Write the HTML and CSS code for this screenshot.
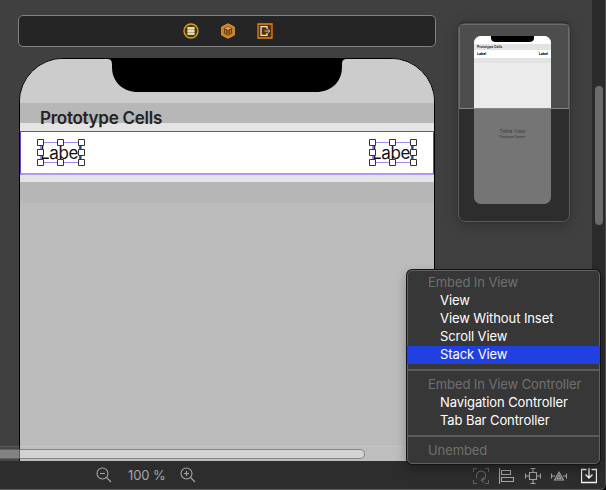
FILE: index.html
```html
<!DOCTYPE html>
<html lang="en">
<head>
<meta charset="utf-8">
<title>Interface Builder</title>
<link rel="stylesheet" href="styles.css">
</head>
<body>
<div class="window">
  <main class="canvas">
    <div class="scene">
      <div class="dock">
        <svg width="16" height="16" viewBox="0 0 16 16"><circle cx="8" cy="8" r="7" fill="#4f3b06" stroke="#dfa112" stroke-width="1.3"/><path d="M4.500 4h7v7.500h-7z" fill="#b5a987"/><path d="M4.500 5h7M4.500 8h7M4.500 11h7" stroke="#f4edd8" stroke-width="1.600"/></svg>
        <svg width="16" height="16" viewBox="0 0 16 16"><path d="M8 .8 14.300 4v8L8 15.200 1.700 12V4z" fill="#c77b24" stroke="#ec972d"/><path d="M8 3.500 12 5.300v5.200L8 12.600 4 10.500V5.300z" fill="#6b4010"/><path d="M4.500 5.300 8 4l3.500 1.300L8 7z" fill="#d9a568"/><path d="M5.500 7v3.500M8 7.500v4.500M10.500 7v3.500" stroke="#c9924f" stroke-width=".8"/></svg>
        <svg width="16" height="16" viewBox="0 0 16 16"><path d="M1 1h14v14H1z" fill="#573006" stroke="#e8820e" stroke-width="1.300"/><path d="M10 6V3.700H4v8.600h6V10" fill="none" stroke="#efe3d4" stroke-width="1.300"/><path d="M7.500 8h5M10.800 6.200 12.800 8l-2 1.800" fill="none" stroke="#d8c4a8"/></svg>
      </div>
      <div class="phone">
        <svg class="notch" width="240" height="34" viewBox="0 0 240 34"><path d="M0 0h240c-4 0-5 2-5 6v2c0 15-11 25-26 25H31C16 33 5 23 5 8V6C5 2 4 0 0 0z"/></svg>
        <div class="status"></div>
        <div class="section"><span>Prototype Cells</span></div>
        <div class="gap"></div>
        <div class="cell">
          <div class="label"><span>Label</span><svg class="handles" width="48" height="27" viewBox="0 0 48 27"><path class="frame" d="M3.500 3.500h41v20h-41z"/><path class="knobs" d="M.5.500h6v6h-6zM20.500.500h6v6h-6zM41.500.500h6v6h-6zM.5 10.500h6v6h-6zM41.500 10.500h6v6h-6zM.5 20.500h6v6h-6zM20.500 20.500h6v6h-6zM41.500 20.500h6v6h-6z"/></svg></div>
          <div class="label"><span>Label</span><svg class="handles" width="48" height="27" viewBox="0 0 48 27"><path class="frame" d="M3.500 3.500h41v20h-41z"/><path class="knobs" d="M.5.500h6v6h-6zM20.500.500h6v6h-6zM41.500.500h6v6h-6zM.5 10.500h6v6h-6zM41.500 10.500h6v6h-6zM.5 20.500h6v6h-6zM20.500 20.500h6v6h-6zM41.500 20.500h6v6h-6z"/></svg></div>
        </div>
        <div class="gap"></div>
        <div class="footer"></div>
      </div>
    </div>
    <aside class="minimap">
      <div class="mini-phone">
        <svg class="mini-notch" width="43" height="6" viewBox="0 0 43 6"><path d="M0 0h43v2q0 4-5 4H5Q0 6 0 2z"/></svg>
        <div class="mini-status"></div>
        <div class="mini-section">Prototype Cells</div>
        <div class="mini-cell"><span>Label</span><span>Label</span></div>
        <div class="mini-footer"></div>
        <div class="mini-title">Table View</div>
        <div class="mini-sub">Prototype Content</div>
      </div>
      <div class="shade"></div>
      <div class="viewport"></div>
    </aside>
    <div class="vscroll"><div class="vthumb"></div></div>
    <div class="hscroll"><div class="hthumb"></div></div>
  </main>
  <footer class="bar">
    <div class="zoom">
      <svg width="16" height="16" viewBox="0 0 16 16"><circle cx="6.500" cy="6.500" r="5.500"/><path d="M10.500 10.500 15 15M4 6.500h5"/></svg>
      <span>100 %</span>
      <svg width="16" height="16" viewBox="0 0 16 16"><circle cx="6.500" cy="6.500" r="5.500"/><path d="M10.500 10.500 15 15M4 6.500h5M6.500 4v5"/></svg>
    </div>
    <div class="tools">
      <svg class="dim" width="16" height="16" viewBox="0 0 16 16"><path d="M.5 4V.5H4M12 .5h3.500V4M.5 12v3.500H4M12 15.500h3.500V12M4.200 10.200A4.600 4.600 0 1 1 8.500 12.300M11 9.500 8.200 12.300l2.800 2.200"/></svg>
      <svg width="16" height="16" viewBox="0 0 16 16"><path d="M.5 0v16M2.500 2.500h9v4h-9zM2.500 9.500h12v4h-12z"/></svg>
      <svg width="16" height="16" viewBox="0 0 16 16"><path d="M4.500 4.500h7v7h-7zM8 4V.5M5.500.5h5M8 12v3.500M5.500 15.500h5M4 8H.5M.5 5.500v5M12 8h3.500M15.500 5.500v5"/></svg>
      <svg width="16" height="16" viewBox="0 0 16 16"><path d="M.5 5.500v5M.5 8H4M15.500 5.500v5M15.500 8H12M8 4l4.500 8h-9zM8 7l1.800 3.500H6.200z"/></svg>
      <svg class="active" width="16" height="16" viewBox="0 0 16 16"><path d="M5.500 1.500h-5v13h15v-13h-5M8 0v10M4.500 6.500 8 10l3.500-3.500"/></svg>
    </div>
  </footer>
  <nav class="menu">
    <div class="heading"><span>Embed In View</span></div>
    <div class="item"><span>View</span></div>
    <div class="item"><span>View Without Inset</span></div>
    <div class="item"><span>Scroll View</span></div>
    <div class="item selected"><span>Stack View</span></div>
    <hr>
    <div class="heading"><span>Embed In View Controller</span></div>
    <div class="item"><span>Navigation Controller</span></div>
    <div class="item"><span>Tab Bar Controller</span></div>
    <hr>
    <div class="heading"><span>Unembed</span></div>
  </nav>
</div>
</body>
</html>
```
FILE: styles.css
```css
* { box-sizing: border-box; }
body { margin: 0; background: #000; font-family: Inter, "Liberation Sans", sans-serif; }
svg { display: block; flex: none; }
.window {
  position: relative;
  display: flex;
  flex-direction: column;
  width: 606px;
  height: 490px;
  overflow: hidden;
  background: #2d2d2d;
  border-right: 1px solid #505050;
  border-bottom: 1px solid #606060;
  border-bottom-right-radius: 6px;
}
.canvas { position: relative; display: flex; height: 461px; background: #404040; overflow: hidden; }
.scene { width: 418px; margin: 15px 0 0 18px; flex: none; }
.dock {
  display: flex;
  justify-content: center;
  align-items: center;
  gap: 21px;
  height: 32px;
  padding-left: 1px;
  border: 1px solid #818181;
  border-radius: 5px;
  background: #252525;
}
.phone {
  position: relative;
  width: 416px;
  height: 480px;
  margin: 11px 0 0 1px;
  border: 1px solid #000;
  border-radius: 44px 44px 0 0;
  background: #bcbcbc;
  overflow: hidden;
}
.notch { position: absolute; left: 87px; top: 0; }
.status { height: 44px; background: #ccc; }
.section {
  height: 20px;
  padding-left: 20px;
  background: #b7b7b7;
  color: #232323;
  font-size: 17px;
  font-weight: 600;
  line-height: 30px;
  letter-spacing: -0.27px;
  white-space: nowrap;
}
.section span { position: relative; }
.gap { height: 8px; background: #e4e4e4; }
.cell {
  display: flex;
  justify-content: space-between;
  height: 44px;
  padding: 10px 19px;
  border: 1px solid #6f42d8;
  border-bottom: 2px solid #b296f3;
  background: #fff;
}
.cell + .gap { height: 7px; }
.label { position: relative; width: 42px; height: 21px; font-size: 17px; line-height: 22px; letter-spacing: -0.35px; color: #111; }
.handles { position: absolute; left: -3px; top: -3px; }
.frame { fill: none; stroke: #a487f5; }
.knobs { fill: #fff; stroke: #333; }
.footer { height: 21px; background: #b6b6b6; }

.minimap {
  position: relative;
  flex: none;
  width: 112px;
  height: 200px;
  margin: 22px 0 0 22px;
  padding: 14px 15px;
  border: 1px solid #5c5c5c;
  border-top-color: #303030;
  border-radius: 7px;
  background: #4d4d4d;
  box-shadow: 0 3px 14px rgba(0, 0, 0, .25), 0 0 1px #111;
  overflow: hidden;
}
.mini-phone { position: relative; height: 168px; width: 77px; margin-top: -1px; border-radius: 7px; background: #ebebeb; overflow: hidden; color: #111; }
.mini-notch { position: absolute; left: 17px; top: 0; }
.mini-status { height: 8px; background: #fff; }
.mini-section { height: 6px; padding-left: 3px; background: #e3e3e3; font-size: 3.400px; line-height: 6px; white-space: nowrap; font-weight: 600; }
.mini-cell { display: flex; justify-content: space-between; height: 8px; padding: 0 3px; background: #fff; font-size: 3.500px; line-height: 8px; font-weight: 700; color: #000; }
.mini-footer { height: 5px; background: #e3e3e3; }
.mini-title { margin-top: 64px; font-size: 5px; line-height: 8px; text-align: center; color: #777; }
.mini-sub { font-size: 3px; line-height: 4px; text-align: center; color: #555; }
.shade { position: absolute; left: 0; right: 0; top: 86px; bottom: 0; background: rgba(20, 20, 20, .55); }
.viewport { position: absolute; left: 0; right: 0; top: 1px; height: 85px; border: 1px solid #6b6b6b; border-bottom-color: #858585; }
.vscroll { width: 13px; margin-left: auto; padding: 86px 2px 0 3px; background: #2b2b2b; }
.vthumb { width: 8px; height: 139px; border-radius: 4px; background: #6b6b6b; }
.hscroll { position: absolute; left: 0; right: 13px; bottom: 0; height: 15px; padding-top: 2px; border-top: 1px solid rgba(255, 255, 255, .1); background: rgba(255, 255, 255, .04); }
.hthumb { width: 366px; height: 10px; margin-left: -1px; border: 1px solid rgba(70, 70, 70, .55); border-left: 0; border-radius: 0 5px 5px 0; background: rgba(255, 255, 255, .32); }

.bar { display: flex; justify-content: space-between; align-items: center; height: 28px; padding: 0 8px 0 96px; background: #2d2d2d; }
.bar svg { fill: none; stroke: #a5a5a5; stroke-width: 1.100; }
.zoom { display: flex; align-items: center; gap: 16px; color: #a5a5a5; font-size: 13px; letter-spacing: -0.1px; white-space: nowrap; }
.zoom span { width: 36px; }
.tools { display: flex; gap: 10px; padding-top: 1px; }
.bar .dim { stroke: #626262; }
.bar .active { margin-left: 4px; stroke: #f2f2f2; stroke-width: 1.300; }

.menu {
  position: absolute;
  left: 407px;
  top: 270px;
  width: 193px;
  height: 194px;
  padding-top: 3px;
  border: 1px solid #606060;
  border-radius: 5px;
  background: #373737;
  box-shadow: 0 0 0 1px #151515, 0 5px 12px rgba(0, 0, 0, .35);
  color: #fff;
  font-size: 13px;
  line-height: 17px;
  letter-spacing: -0.09px;
  white-space: nowrap;
}
.heading { height: 18px; padding-left: 20px; color: #707070; }
.item { height: 18px; padding-left: 32px; }
.selected { margin: 0 -1px; padding-left: 33px; background: #2041df; }
.menu hr { height: 2px; margin: 5px 0; border: 0; background: #5b5b5b; }
```
